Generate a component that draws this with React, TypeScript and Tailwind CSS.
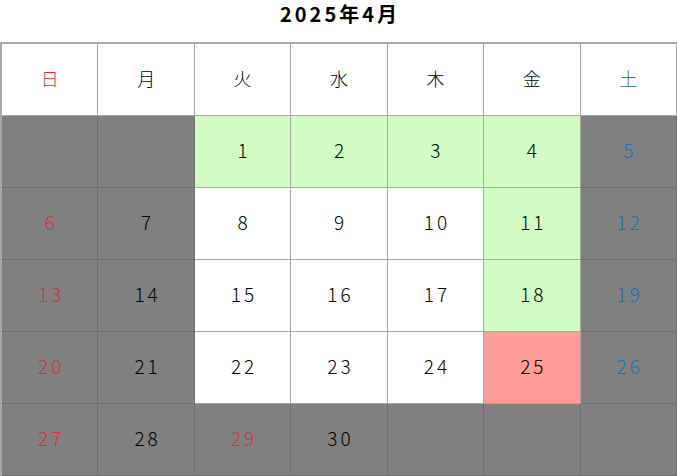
const days = ['日', '月', '火', '水', '木', '金', '土'];

type Cell = { d?: number; kind: 'gray' | 'white' | 'green' | 'pink' };

const g = (d?: number): Cell => ({ d, kind: 'gray' });
const w = (d: number): Cell => ({ d, kind: 'white' });
const gr = (d: number): Cell => ({ d, kind: 'green' });

const weeks: Cell[][] = [
  [g(), g(), gr(1), gr(2), gr(3), gr(4), g(5)],
  [g(6), g(7), w(8), w(9), w(10), gr(11), g(12)],
  [g(13), g(14), w(15), w(16), w(17), gr(18), g(19)],
  [g(20), g(21), w(22), w(23), w(24), { d: 25, kind: 'pink' }, g(26)],
  [g(27), g(28), g(29), g(30), g(), g(), g()],
];

const bg = {
  gray: 'bg-[#808080] border-[#6e6e6e]',
  white: 'bg-white border-[#a8a8a8]',
  green: 'bg-[#d3fcc4] border-[#a8a8a8]',
  pink: 'bg-[#ff9c98] border-[#a8a8a8]',
};

function colorFor(col: number, d?: number) {
  // 29日は祝日
  if (col === 0 || d === 29) return 'text-[#d2323c]';
  if (col === 6) return 'text-[#1670bd]';
  return 'text-black';
}

function App() {
  return (
    <div className="w-[677px] h-[476px] bg-white overflow-hidden" style={{ fontFamily: "'Noto Sans CJK JP', 'Noto Sans', sans-serif" }}>
      <div className="h-[42px] flex justify-center">
        <div className="text-[20px] leading-[28px] font-bold tracking-[3px] text-black pl-[3px]">2025年4月</div>
      </div>

      <div className="grid grid-cols-7 border-t-2 border-l-2 border-[#a8a8a8]">
        {days.map((day, i) => (
          <div key={day} className={`h-[72px] flex items-center justify-center border-r border-b border-[#a8a8a8] bg-white text-[18px] font-light pb-[3px] ${colorFor(i)}`}>
            {day}
          </div>
        ))}
        {weeks.map((week, wi) =>
          week.map((c, ci) => (
            <div
              key={`${wi}-${ci}`}
              className={`h-[72px] flex items-center justify-center border-r border-b text-[19px] font-light tracking-[3px] pl-[3px] pb-[3px] ${bg[c.kind]} ${colorFor(ci, c.d)}`}
            >
              {c.d ?? ''}
            </div>
          ))
        )}
      </div>
    </div>
  );
}

export default App;
